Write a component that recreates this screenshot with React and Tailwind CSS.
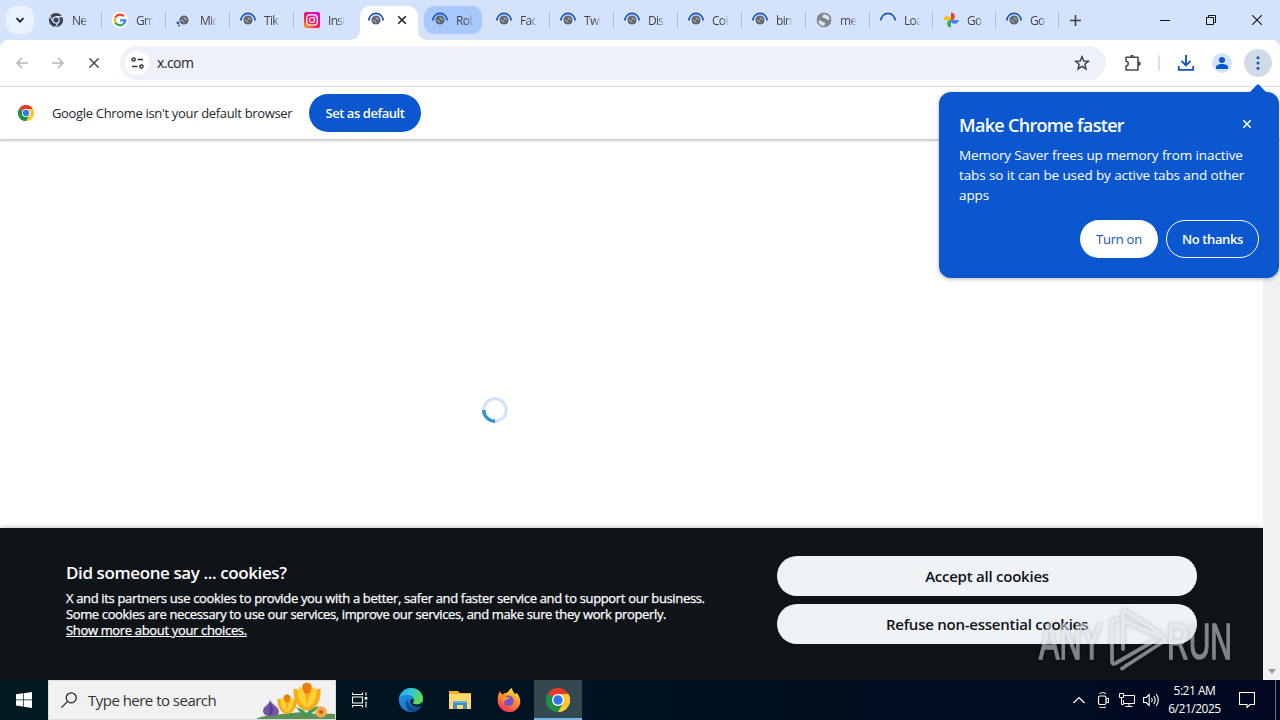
import React from "react";

const Svg = ({ className = "", children, viewBox = "0 0 16 16" }) => (
  <svg className={"shrink-0 " + className} viewBox={viewBox} fill="none">{children}</svg>
);

const Globe = () => (
  <>
    <circle cx="8" cy="8" r="7.2" fill="#80868b" />
    <path d="M1.200 9.200C3 8 4.500 8.200 6 9.400c1.400 1.200 3 .6 3.200 2.200.1 1.200-1 1.600-1.400 2.800C4.500 14.600 1.500 12.500 1.200 9.200ZM7.500 2C7.500 4 5.600 4.200 6.600 5.400c1 1 2.400.2 3.400 1.400s2.500 1.200 4.300.8C14.200 4.500 11.500 1.900 7.500 2Z" fill="#dfe7f3" />
    <circle cx="8" cy="8" r="6.6" stroke="#80868b" strokeWidth="1.500" />
  </>
);

const MiniGlobe = () => (
  <>
    <circle cx="8" cy="8" r="4.600" fill="#62676d" />
    <path d="M4.800 8.600c1.200-.4 1.900 0 2.500.6s.9.700.5 1.300M8.100 5.500c-.3.900.2 1.100.8 1.300s1.100.6 2 .4" stroke="#cdd7e8" strokeWidth="1" />
  </>
);

const Loading = ({ globe = true }) => (
  <Svg className="h-4 w-4">
    {globe && <MiniGlobe />}
    <path d="M.9 8.500A7.100 7.100 0 0 1 15.100 8.500" stroke="#1a56bb" strokeWidth="1.700" />
  </Svg>
);

const Chrome = ({ className }) => (
  <Svg className={className} viewBox="0 0 48 48">
    <path d="M24 24 3.2 12A24 24 0 0 1 44.8 12Z" fill="#e33b2e" />
    <path d="M24 24 44.8 12A24 24 0 0 1 24 48Z" fill="#fcc934" />
    <path d="M24 24 24 48A24 24 0 0 1 3.2 12Z" fill="#1e9048" />
    <path d="M24 12h20.8A24 24 0 0 1 24 48l10.4-18Z" fill="#fcc934" />
    <path d="M13.6 30 3.2 12A24 24 0 0 0 24 48l10.4-18Z" fill="#1e9048" />
    <circle cx="24" cy="24" r="12" fill="#fff" />
    <circle cx="24" cy="24" r="9.4" fill="#2f78e8" />
  </Svg>
);

const icons = {
  chrome: (
    <Svg className="h-4 w-4">
      <circle cx="8" cy="8" r="7.1" fill="#3c4650" />
      <circle cx="8" cy="8" r="3.2" stroke="#d6e3fd" strokeWidth="1.2" />
      <path d="M8 4.6h6.7M5.2 9.7 1.9 4M10.8 9.7 7.5 15" stroke="#d6e3fd" strokeWidth="1.2" />
    </Svg>
  ),
  google: (
    <Svg className="h-4 w-4" viewBox="0 0 48 48">
      <circle cx="24" cy="24" r="24" fill="#fff" />
      <g strokeWidth="7">
        <path d="M36 13A16 16 0 0 0 10 16.5" stroke="#ea4335" />
        <path d="M10 16.5a16 16 0 0 0 0 15" stroke="#fbbc04" />
        <path d="M10 31.5A16 16 0 0 0 34 36.5" stroke="#34a853" />
        <path d="M34 36.5a16 16 0 0 0 6-11.5H24" stroke="#4285f4" />
      </g>
    </Svg>
  ),
  ms: (
    <Svg className="h-4 w-4">
      <MiniGlobe />
      <circle cx="1.900" cy="10.900" r="1.400" fill="#1a56bb" />
      <circle cx="3" cy="13.600" r="1" fill="#1a56bb" />
    </Svg>
  ),
  insta: (
    <Svg className="h-4 w-4">
      <defs>
        <linearGradient id="ig" x1="0" y1="1" x2=".7" y2="0">
          <stop offset="0" stopColor="#ffc01e" />
          <stop offset=".4" stopColor="#fb1f50" />
          <stop offset="1" stopColor="#c80ad0" />
        </linearGradient>
      </defs>
      <rect width="16" height="16" rx="2" fill="url(#ig)" />
      <rect x="2.8" y="2.8" width="10.4" height="10.4" rx="3" stroke="#fff" strokeWidth="1.2" />
      <circle cx="8" cy="8" r="2.5" stroke="#fff" strokeWidth="1.2" />
      <circle cx="11.1" cy="4.9" r=".7" fill="#fff" />
    </Svg>
  ),
  load: <Loading />,
  ring: <Loading globe={false} />,
  globe: <Svg className="h-4 w-4"><Globe /></Svg>,
  photos: (
    <Svg className="h-4 w-4">
      <path d="M8 8V.4a3.9 3.9 0 0 1 3.8 3.8c0 1.6-.8 3-1.8 3.8Z" fill="#ea4335" />
      <path d="M8 8h7.6a3.9 3.9 0 0 1-3.8 3.8C10.200 11.800 8.800 11 8 10Z" fill="#4285f4" />
      <path d="M8 8v7.600a3.900 3.900 0 0 1-3.800-3.800c0-1.600.8-3 1.800-3.800Z" fill="#34a853" />
      <path d="M8 8H.4a3.900 3.900 0 0 1 3.800-3.800c1.600 0 3 .8 3.800 1.800Z" fill="#fbbc04" />
    </Svg>
  ),
};

const tabs = [
  ["chrome", "Ne"], ["google", "Gm"], ["ms", "Mic"], ["load", "Tik"], ["insta", "Inst", "plain"],
  ["load", "", "active"], ["load", "Rob", "hover"], ["load", "Fac"], ["load", "Twi"], ["load", "Dis"],
  ["load", "Coi"], ["load", "bin"], ["globe", "me"], ["ring", "Loa", "", "n"], ["photos", "Go", "", "n"], ["load", "Go", "", "n"],
];

function Tab({ icon, label, kind, narrow }) {
  if (kind === "active") {
    return (
      <div className="relative flex h-[34px] w-16 shrink-0 self-end pr-[5px] pl-px">
        <div className="flex w-[58px] items-center rounded-t-[10px] bg-white pb-[6px] pl-2">
          {icons[icon]}
          <Svg className="ml-[13px] h-[10px] w-[10px]" viewBox="0 0 10 10">
            <path d="m1.200 1.200 7.600 7.600m0-7.600-7.600 7.600" stroke="#1f2328" strokeWidth="1.600" />
          </Svg>
        </div>
        <Svg className="absolute bottom-0 -left-[9px] h-[10px] w-[10px]" viewBox="0 0 10 10"><path d="M0 10h10V0A10 10 0 0 1 0 10Z" fill="#fff" /></Svg>
        <Svg className="absolute right-[-4px] bottom-0 h-[10px] w-[10px]" viewBox="0 0 10 10"><path d="M10 10H0V0a10 10 0 0 0 10 10Z" fill="#fff" /></Svg>
      </div>
    );
  }
  return (
    <div className={"flex h-full shrink-0 items-center " + (narrow ? "w-[63px]" : "w-16")}>
      <div className={"ml-px flex h-7 w-[58px] items-center rounded-[10px] pl-2 " + (kind === "hover" ? "bg-[#a8c7fa]" : "")}>
        {icons[icon]}
        <span className="ml-2 w-[17px] overflow-hidden pt-px text-[12px] tracking-[-0.7px] whitespace-nowrap text-[#3f464f] [mask-image:linear-gradient(to_right,black_60%,transparent)]">{label}</span>
      </div>
      {!kind && <div className={"h-4 w-px bg-[#a3bce8] " + (narrow ? "ml-[2px]" : "ml-[3px]")} />}
    </div>
  );
}

const TabStrip = () => (
  <div className="flex h-10 shrink-0 items-center bg-[#d5e2fc]">
    <div className="ml-[6px] flex h-7 w-7 shrink-0 items-center justify-center rounded-[10px] bg-[#e9f0fe]">
      <Svg className="h-[10px] w-[10px]" viewBox="0 0 10 10"><path d="m1.500 3.200 3.500 3.500 3.500-3.500" stroke="#1f2328" strokeWidth="1.800" /></Svg>
    </div>
    <div className="ml-[5px] flex h-full items-center">
      {tabs.map(([icon, label, kind, narrow], i) => <Tab key={i} icon={icon} label={label} kind={kind} narrow={narrow} />)}
    </div>
    <Svg className="ml-[10px] h-[11px] w-[11px]" viewBox="0 0 11 11"><path d="M5.500 0v11M0 5.500h11" stroke="#3c4043" strokeWidth="1.600" /></Svg>
    <Svg className="mr-[36px] ml-auto h-[10px] w-[10px]" viewBox="0 0 10 10"><path d="M0 5.500h10" stroke="#111" /></Svg>
    <Svg className="mr-[36px] h-[10px] w-[10px]" viewBox="0 0 10 10"><path d="M.5 2.500h7v7h-7zM2.500 2.500v-2h7v7h-2" stroke="#111" /></Svg>
    <Svg className="mr-[18px] h-[10px] w-[10px]" viewBox="0 0 10 10"><path d="m0 0 10 10M10 0 0 10" stroke="#111" strokeWidth="1.100" /></Svg>
  </div>
);

const Toolbar = () => (
  <div className="bg-[#d5e2fc]">
    <div className="flex h-[47px] items-center rounded-t-lg border-b border-[#dfe3ea] bg-white">
      <Svg className="ml-4 h-3 w-3" viewBox="0 0 12 12"><path d="M12 6H1M6 1 1 6l5 5" stroke="#b0b3b8" strokeWidth="1.500" /></Svg>
      <Svg className="ml-6 h-3 w-3" viewBox="0 0 12 12"><path d="M0 6h11M6 1l5 5-5 5" stroke="#b0b3b8" strokeWidth="1.500" /></Svg>
      <Svg className="ml-[25px] h-[10px] w-[10px]" viewBox="0 0 10 10"><path d="m.4.400 9.200 9.200m0-9.200L.4 9.600" stroke="#474b50" strokeWidth="1.500" /></Svg>
      <div className="ml-[21px] flex h-[34px] w-[986px] items-center rounded-full bg-[#edf1fa] pl-[5px]">
        <div className="flex h-6 w-6 items-center justify-center rounded-full bg-white">
          <Svg className="h-3 w-[13px]" viewBox="0 0 13 12">
            <path d="M6.500 2.500H12M1 9.500h5.500" stroke="#333" strokeWidth="1.600" />
            <circle cx="2.600" cy="2.500" r="1.600" stroke="#333" strokeWidth="1.500" />
            <circle cx="10.400" cy="9.500" r="1.600" stroke="#333" strokeWidth="1.500" />
          </Svg>
        </div>
        <span className="mb-px ml-2 text-[14px] tracking-[-0.55px] text-[#1f2328]">x.com</span>
        <Svg className="mr-4 ml-auto h-4 w-4"><path d="m8 1.600 1.700 4.400 4.700.300-3.600 3 1.200 4.600L8 11.300l-4 2.600 1.200-4.600-3.600-3 4.700-.300Z" stroke="#3c4043" strokeWidth="1.400" /></Svg>
      </div>
      <Svg className="ml-[18px] h-[18px] w-[18px]" viewBox="0 0 18 18">
        <path d="M2 3.200H14v12.800H2v-4c3-.2 3-4.600 0-4.800Z" stroke="#474b50" strokeWidth="1.500" strokeLinejoin="round" />
        <path d="M6 2.800a2 2 0 0 1 4 0Z" fill="#474b50" />
        <path d="M14.300 7.600a2 2 0 0 1 0 4Z" fill="#474b50" stroke="#474b50" />
      </Svg>
      <div className="ml-[16px] h-4 w-[2px] rounded-full bg-[#d3e0f8]" />
      <Svg className="ml-[17px] h-[18px] w-[18px]" viewBox="0 0 18 18"><path d="M9 1v10M4.500 6.800 9 11.300l4.500-4.500M1.800 12v3.900h14.400V12" stroke="#1555b8" strokeWidth="1.900" /></Svg>
      <div className="ml-[17px] flex h-5 w-5 items-center justify-center rounded-full bg-[#d3e3fd]">
        <Svg className="h-3 w-3" viewBox="0 0 12 12"><circle cx="6" cy="3" r="3" fill="#0b57d0" /><path d="M0 12v-1.800C0 8.200 3 7 6 7s6 1.200 6 3.200V12Z" fill="#0b57d0" /></Svg>
      </div>
      <div className="ml-3 flex h-7 w-7 items-center justify-center rounded-full bg-[#d1dbe8]">
        <Svg className="h-[14px] w-1" viewBox="0 0 4 14"><g fill="#1555b8"><circle cx="2" cy="1.800" r="1.500" /><circle cx="2" cy="7" r="1.500" /><circle cx="2" cy="12.200" r="1.500" /></g></Svg>
      </div>
    </div>
  </div>
);

const InfoBar = () => (
  <div className="z-10 flex h-[53px] shrink-0 items-center border-b border-[#cfcfcf] bg-white shadow-[0_1px_2px_rgba(0,0,0,0.22)]">
    <Chrome className="ml-[18px] h-4 w-4" />
    <span className="ml-[18px] w-[257px] pt-px text-[13px] tracking-[-0.33px] whitespace-nowrap text-[#24282d]">Google Chrome isn't your default browser</span>
    <button className="h-[38px] w-28 rounded-full bg-[#0b57d0] pt-[2px] text-[13px] font-semibold tracking-[-0.45px] whitespace-nowrap text-white">Set as default</button>
  </div>
);

const Promo = () => (
  <div className="absolute top-[92px] left-[939px] z-20 flex h-[186px] w-[340px] flex-col rounded-xl bg-[#0b57d0] px-5 pt-[21px] text-white shadow-[0_1px_4px_rgba(0,0,0,0.3)]">
    <Svg className="absolute -top-2 right-3 h-[9px] w-[18px]" viewBox="0 0 18 9"><path d="M0 9 8 .8q1-1 2 0L18 9Z" fill="#0b57d0" /></Svg>
    <div className="flex h-6 items-center">
      <h2 className="text-[18px] font-semibold tracking-[-0.68px] whitespace-nowrap">Make Chrome faster</h2>
      <Svg className="mr-2 mb-[3px] ml-auto h-2 w-2" viewBox="0 0 8 8"><path d="m.2.200 7.600 7.600m0-7.600L.2 7.800" stroke="#fff" strokeWidth="1.500" /></Svg>
    </div>
    <p className="mt-[8px] text-[13.5px] leading-5 tracking-[-0.11px] whitespace-nowrap">Memory Saver frees up memory from inactive<br />tabs so it can be used by active tabs and other<br />apps</p>
    <div className="mt-[15px] flex justify-end gap-2 text-[13px] whitespace-nowrap">
      <button className="h-[38px] w-[78px] rounded-full bg-white pt-[2px] font-medium tracking-[-0.25px] text-[#0b57d0]">Turn on</button>
      <button className="h-[38px] w-[93px] rounded-full border border-white pt-[2px] font-semibold tracking-[-0.4px]">No thanks</button>
    </div>
  </div>
);

const Watermark = () => (
  <svg className="absolute top-[604px] left-[1034px] z-20 h-[72px] w-[200px] opacity-55 drop-shadow-[0_0_2px_rgba(0,0,0,0.4)]" viewBox="0 0 200 72">
    <g fill="#dfe1e3" stroke="#dfe1e3" strokeWidth="1.500" fontFamily="Liberation Sans Narrow, Liberation Sans, sans-serif" fontSize="50">
      <text x="5" y="55" textLength="63" lengthAdjust="spacingAndGlyphs">ANY</text>
      <text x="133" y="55" textLength="65" lengthAdjust="spacingAndGlyphs">RUN</text>
    </g>
    <g fill="none" stroke="#dfe1e3" strokeWidth="3.800" strokeLinejoin="round" strokeLinecap="round">
      <path d="M83.500 15.500c-4 0-5.500 1-5.500 4V57c0 3 1.500 3.500 4 2l38-22" />
      <path d="M89 45V9c0-2 1.500-2.500 3-1.500L127 30" />
      <path d="M89 16.500l39 16.500c3 1.500 3 3.500 0 5.500L91 62.500q-2 2-3 2" />
    </g>
  </svg>
);

const Page = () => (
  <div className="flex min-h-0 flex-1">
    <div className="flex w-[1263px] flex-col bg-white">
      <div className="flex h-[388px] shrink-0 items-end pb-[105px] pl-[482px]">
        <Svg className="h-[26px] w-[26px]" viewBox="0 0 26 26">
          <circle cx="13" cy="13" r="11.300" stroke="#d2e5f5" strokeWidth="3.200" />
          <path d="M1.700 13A11.300 11.300 0 0 0 13 24.300" stroke="#3292d2" strokeWidth="3.200" />
        </Svg>
      </div>
      <section className="flex flex-1 justify-between bg-[#0f1419] pr-[66px] pl-[66px] text-white shadow-[0_0_5px_rgba(0,0,0,0.3)]">
        <div className="pt-[33px] whitespace-nowrap">
          <h1 className="text-[17px] leading-6 font-semibold tracking-[-0.4px]">Did someone say ... cookies?</h1>
          <p className="mt-[5px] text-[13px] leading-4 font-medium tracking-[-0.34px] [-webkit-text-stroke:0.25px_white]">X and its partners use cookies to provide you with a better, safer and faster service and to support our business.<br /><span className="tracking-[-0.37px]">Some cookies are necessary to use our services, improve our services, and make sure they work properly.</span><br /><span className="underline">Show more about your choices.</span></p>
        </div>
        <div className="flex w-[420px] flex-col gap-2 pt-7 text-[15px] font-semibold tracking-[-0.24px] text-[#0f1419]">
          <button className="h-10 rounded-full bg-[#eff3f6]">Accept all cookies</button>
          <button className="h-10 rounded-full bg-[#eff3f6]">Refuse non-essential cookies</button>
        </div>
      </section>
    </div>
    <div className="flex flex-1 items-end justify-center bg-[#f1f1f1] pb-[6px]">
      <Svg className="h-[5px] w-[8px]" viewBox="0 0 8 5"><path d="M0 0h8L4 5Z" fill="#9b9b9b" /></Svg>
    </div>
  </div>
);

const Crocus = ({ x, y, s }) => (
  <g transform={`translate(${x} ${y}) scale(${s})`}>
    <path d="M0 15C-7 14-10 7-10-1-8-2-6 0-5 2-5-2-3-4 0-5 3-4 5-2 5 2 6 0 8-2 10-1c1 8-3 15-10 16Z" fill="#f5ab1a" />
    <path d="M-6-3C-2-1 0 5 0 13-6 9-8 4-6-3ZM6-3C3-1 1 5 0 13 7 9 8 3 6-3Z" fill="#ffcf33" />
    <path d="M-3.500-4Q0-8 3.500-4L2 2H-2Z" fill="#ec7d11" />
  </g>
);

const Flowers = () => (
  <Svg className="h-[38px] w-[80px]" viewBox="0 0 80 38">
    <path d="M1 38C8 34 18 34 28 33s16-3 26-1 18 0 26 1v5Z" fill="#5d9155" />
    <path d="M37 34c-1-5-6-6-10-6 2 5 5 7 9 9M52 35c-1-6 6-9 12-10-3 5-8 7-10 10M52 35c-1-6-6-7-11-9 4 6 6 6 9 10" fill="#3e9c56" />
    <path d="M15 18c0 5 9 7 9 13-1 6-16 6-16-1 0-5 7-6 7-12Z" fill="#7556a5" />
    <path d="M15 21c1 6-2 9 0 14 4-4 4-9 0-14Z" fill="#57408b" />
    <Crocus x={32} y={19} s={0.95} />
    <Crocus x={52} y={9.500} s={1.350} />
    <circle cx="66" cy="31" r="5.800" fill="#f3aa46" />
    <circle cx="66" cy="31" r="2" fill="#c95d1c" />
  </Svg>
);

const Taskbar = () => (
  <div className="flex h-10 shrink-0 items-center bg-linear-to-r from-[#021a22] to-[#010820] text-white">
    <Svg className="ml-4 h-4 w-4"><path d="M0 2.300 7 1.300V7.600H0ZM7.700 1.200 16 0v7.600H7.700ZM0 8.300h7v6.300l-7-1ZM7.700 8.300H16V16l-8.300-1.200Z" fill="#fff" /></Svg>
    <div className="ml-4 flex h-10 w-72 items-center border border-[#d8dadc] bg-[#f1f1f1] pl-3">
      <Svg className="mb-px h-4 w-4"><circle cx="10.200" cy="5.800" r="5" stroke="#222" strokeWidth="1.200" /><path d="M6.600 9.400.4 15.600" stroke="#222" strokeWidth="1.200" /></Svg>
      <span className="ml-[11px] text-[15px] tracking-[-0.52px] whitespace-nowrap text-[#333]">Type here to search</span>
      <div className="ml-auto"><Flowers /></div>
    </div>
    <Svg className="ml-4 h-4 w-4"><path d="M.5.500v2h10v-2M.5 15.500v-2h10v2M.5 5h10v6H.5ZM14 .500v3M14 9.500v6" stroke="#fff" strokeWidth="1.100" /><rect x="12.700" y="5" width="2.600" height="2.600" fill="#fff" /></Svg>
    <Svg className="ml-[31px] h-6 w-6" viewBox="0 0 24 24">
      <defs>
        <linearGradient id="ea" x1="0" y1="0" x2="1" y2=".4"><stop stopColor="#2697e5" /><stop offset=".5" stopColor="#36c5d8" /><stop offset="1" stopColor="#61da52" /></linearGradient>
        <linearGradient id="eb" x1="0" y1="0" x2="1" y2="1"><stop stopColor="#1d9ae8" /><stop offset="1" stopColor="#1361b8" /></linearGradient>
      </defs>
      <circle cx="12" cy="12" r="12" fill="url(#eb)" />
      <path d="M.2 10C1.500 4 6 0 12 0c7 0 12 5 12 10.500 0 4-3 6-6.500 6-3 0-4-1.200-3.500-2s1-1.300 1-2.700C15 9 12.500 7 8.500 7 5 7 1.500 8 .2 10Z" fill="url(#ea)" />
      <path d="M9 12c0 5 4 8 8.500 8 2 0 3.800-.600 5-1.400C20.500 22 17 24 13 24 8 22.500 6.500 18 7 15c.3-1.500 1-2.500 2-3Z" fill="#134a94" />
      <path d="M15 11.800c0 1.400-.5 1.900-1 2.700s.5 2 3.500 2c2.600 0 4.500-1 5.500-2.500L24 16.500l-1.500 2.100C17 20.500 11 18 11 13c1-2 3.500-2.500 4-1.200Z" fill="#06293a" />
    </Svg>
    <Svg className="ml-[26px] h-[20px] w-[22px]" viewBox="0 0 22 20">
      <path d="M0 1h9l2 2h11v16H0Z" fill="#f0ae22" /><path d="M0 4h22v15H0Z" fill="#ffd96c" />
      <path d="M4 19v-8h14v8h-4v-4H8v4Z" fill="#3f8fc6" /><path d="M4 11h14v2H4Z" fill="#62b2e0" />
    </Svg>
    <Svg className="ml-[26px] h-6 w-6" viewBox="0 0 24 24">
      <defs><linearGradient id="ff" x1=".8" y1="0" x2=".3" y2="1"><stop stopColor="#fff044" /><stop offset=".45" stopColor="#ff9526" /><stop offset="1" stopColor="#f02b63" /></linearGradient></defs>
      <path d="M3 3c.5 2 1.500 3 2.500 3.500C7 5 8 5 9 5c2-.500 3-3.500 6-5 0 3 2 4 3 6l2-1c3 4 4 8 2.800 11.500A11.300 11.300 0 0 1 1.200 16C-.2 11 1 6 3 3Z" fill="url(#ff)" />
      <circle cx="11.500" cy="12.700" r="5.200" fill="#7850cc" />
      <path d="M4 9c3-2 6 0 9 1-1 2-4 1-5 3l-2 1Z" fill="#ff9226" />
    </Svg>
    <div className="ml-[13px] flex h-10 w-12 items-center justify-center border-b-2 border-[#78b4e8] bg-[#344850]"><Chrome className="mt-px h-6 w-6" /></div>
    <Svg className="mr-3 ml-auto h-3 w-3" viewBox="0 0 12 12"><path d="m.5 9 5.500-5.500L11.500 9" stroke="#fff" strokeWidth="1.200" /></Svg>
    <Svg className="mr-[9px] h-4 w-[13px]" viewBox="0 0 13 16"><rect x="1.500" y="4" width="7.500" height="8.500" rx="1.500" stroke="#fff" strokeWidth="1.200" /><path d="m9 7.500 2.500-1.500v5L9 9.500M2.500 1.500Q5.500-.500 9 1.500M2.500 15q3 1.500 6.500 0" stroke="#fff" /></Svg>
    <Svg className="mr-2 h-4 w-4"><path d="M5 3.500h10.500v8H4.500V8M10 11.500v3M6.500 14.500h7M.5 1.500h4v4h-4ZM2.500 5.500v7h2" stroke="#fff" /></Svg>
    <Svg className="mr-[8px] h-4 w-[17px]" viewBox="0 0 17 16"><path d="M.6 5.500h2.600l3-3v11l-3-3H.6ZM8.500 6q1.400 2 0 4M10.800 4q2.800 4 0 8M13.200 2q4.200 6 0 12" stroke="#fff" strokeWidth="1.100" /></Svg>
    <div className="mr-[18px] w-[53px] text-center text-[12px] leading-[18px] tracking-[-0.48px] whitespace-nowrap"><p>5:21 AM</p><p>6/21/2025</p></div>
    <Svg className="mr-5 h-4 w-4"><path d="M.5.500h15v12H11l-3 3v-3H.5Z" stroke="#fff" strokeWidth="1.100" /></Svg>
    <div className="mr-1 h-10 w-px bg-[#68707a]" />
  </div>
);

export default function App() {
  return (
    <div className="relative flex h-[720px] w-[1280px] flex-col overflow-hidden bg-white font-['Open_Sans','Noto_Sans',sans-serif]">
      <TabStrip />
      <Toolbar />
      <InfoBar />
      <Page />
      <Taskbar />
      <Promo />
      <Watermark />
    </div>
  );
}
